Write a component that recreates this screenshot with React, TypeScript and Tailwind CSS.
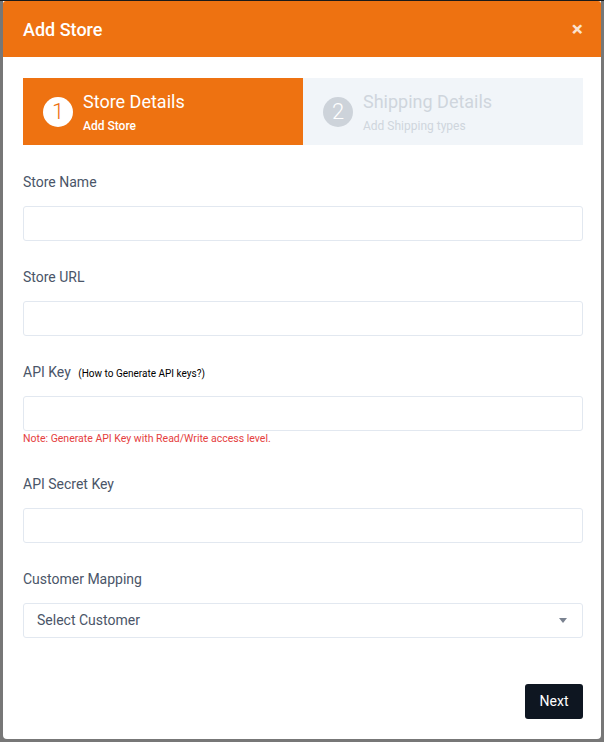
export default function App() {
    const fields = [
        { label: "Store Name", top: "mt-[27px]" },
        { label: "Store URL", top: "mt-[26px]" },
    ]

    return (
        <div className="w-[604px] h-[742px] bg-[#777777] border-t border-[#1a1a1a] overflow-hidden font-['Roboto',sans-serif]">
            <div className="ml-[3px] w-[598px] h-[738px] bg-white rounded-b-[4px] flex flex-col">
                <div className="h-[56px] bg-[#ee7211] flex flex-row items-center justify-between pl-5 pr-[18px] rounded-t-[3px]">
                    <p className="text-white text-[18px] font-medium">Add Store</p>
                    <span className="text-[#fbe3cf] text-[21px] font-bold leading-none">×</span>
                </div>

                <div className="pl-5 pr-[18px] pt-[21px] flex flex-col">
                    <div className="flex flex-row h-[67px]">
                        <div className="w-[280px] bg-[#ee7211] flex flex-row items-center pl-5 gap-[10px]">
                            <div className="w-[30px] h-[30px] rounded-full bg-white flex items-center justify-center text-[#ee7211] text-[22px] font-light leading-none">1</div>
                            <div className="flex flex-col mt-[2px]">
                                <p className="text-white text-[18px] leading-[22px]">Store Details</p>
                                <p className="text-white text-[12px] font-medium leading-[16px] mt-[5px]">Add Store</p>
                            </div>
                        </div>
                        <div className="w-[280px] bg-[#f1f5f9] flex flex-row items-center pl-5 gap-[10px]">
                            <div className="w-[30px] h-[30px] rounded-full bg-[#cdd3da] flex items-center justify-center text-white text-[22px] font-light leading-none">2</div>
                            <div className="flex flex-col mt-[2px]">
                                <p className="text-[#cfd5dd] text-[18px] leading-[22px]">Shipping Details</p>
                                <p className="text-[#cfd5dd] text-[12px] leading-[16px] mt-[5px]">Add Shipping types</p>
                            </div>
                        </div>
                    </div>

                    {fields.map((f) => (
                        <div key={f.label} className={"flex flex-col " + f.top}>
                            <p className="text-[#4a5568] text-[14px] leading-[20px] h-[20px] mb-[14px]">{f.label}</p>
                            <input className="h-[35px] border border-[#e2e8f0] rounded-[3px] px-3 outline-none" />
                        </div>
                    ))}

                    <div className="flex flex-col mt-[26px]">
                        <p className="text-[#4a5568] text-[14px] leading-[20px] h-[20px] mb-[14px]">
                            API Key <span className="text-black text-[10px] ml-1">(How to Generate API keys?)</span>
                        </p>
                        <input className="h-[35px] border border-[#e2e8f0] rounded-[3px] px-3 outline-none" />
                        <p className="text-[#e53e3e] text-[10.5px] leading-[14px] mt-[1px]">Note: Generate API Key with Read/Write access level.</p>
                    </div>

                    <div className="flex flex-col mt-[28px]">
                        <p className="text-[#4a5568] text-[14px] leading-[20px] h-[20px] mb-[14px]">API Secret Key</p>
                        <input className="h-[35px] border border-[#e2e8f0] rounded-[3px] px-3 outline-none" />
                    </div>

                    <div className="flex flex-col mt-[26px]">
                        <p className="text-[#4a5568] text-[14px] leading-[20px] h-[20px] mb-[14px]">Customer Mapping</p>
                        <div className="h-[35px] border border-[#e2e8f0] rounded-[3px] pl-[13px] pr-[15px] flex flex-row items-center justify-between">
                            <span className="text-[#4a5568] text-[14px]">Select Customer</span>
                            <svg width="8" height="5" viewBox="0 0 8 5"><path d="M0 0 L8 0 L4 5 Z" fill="#7a8290" /></svg>
                        </div>
                    </div>

                    <div className="flex flex-row justify-end mt-[46px]">
                        <button className="h-[35px] w-[58px] bg-[#0e1621] text-white text-[14px] rounded-[3px]">Next</button>
                    </div>
                </div>
            </div>
        </div>
    )
}
